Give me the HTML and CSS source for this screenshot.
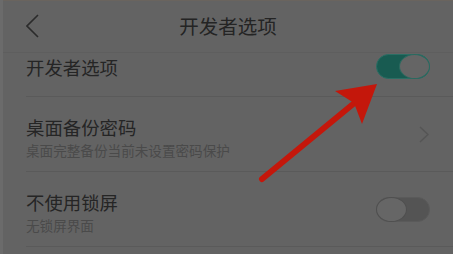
FILE: index.html
```html
<!DOCTYPE html>
<html lang="zh-CN">
<head>
  <meta charset="UTF-8" />
  <meta name="viewport" content="width=device-width, initial-scale=1" />
  <title>开发者选项</title>
  <link rel="stylesheet" href="styles.css">
</head>
<body>
  <div class="screen">
    <header class="topbar">
      <svg class="back" width="14" height="24" viewBox="0 0 14 24">
        <polyline points="12,1 1,12 12,23" fill="none" stroke="#2b2b2b" stroke-width="1.6" />
      </svg>
      <h1>开发者选项</h1>
    </header>

    <div class="row row-first">
      <div class="texts">
        <div class="title">开发者选项</div>
      </div>
      <span class="toggle on"><span class="knob"></span></span>
    </div>

    <div class="row row-tall">
      <div class="texts">
        <div class="title">桌面备份密码</div>
        <div class="sub">桌面完整备份当前未设置密码保护</div>
      </div>
      <svg class="chev" width="10" height="18" viewBox="0 0 10 18">
        <polyline points="1,1 9,8.5 1,16" fill="none" stroke="#555" stroke-width="1.5" />
      </svg>
    </div>

    <div class="row row-tall">
      <div class="texts">
        <div class="title">不使用锁屏</div>
        <div class="sub">无锁屏界面</div>
      </div>
      <span class="toggle off"><span class="knob"></span></span>
    </div>

    <!-- red arrow drawn over the screenshot -->
    <svg class="arrow" width="453" height="254" viewBox="0 0 453 254">
      <line x1="262" y1="179" x2="358" y2="100" stroke="#c4170b" stroke-width="6" stroke-linecap="round" />
      <polygon points="377,84 335,91 354,103 362,124" fill="#c4170b" />
    </svg>
  </div>
</body>
</html>
```

FILE: styles.css
```css
html, body {
  margin: 0;
  padding: 0;
}
body {
  background: #6b6b6b;
  font-family: "Noto Sans CJK SC", "Noto Sans", sans-serif;
  color: #262626;
  width: 453px;
  height: 254px;
  overflow: hidden;
}
.screen {
  position: relative;
  margin-left: 3px;
  height: 254px;
  background: #636363;
  border-top: 1px solid #6a645e;
  box-sizing: border-box;
}
.topbar {
  height: 51px;
  display: flex;
  align-items: center;
  justify-content: center;
  position: relative;
  border-bottom: 1px solid #5e5e5e;
}
.topbar h1 {
  margin: 0;
  font-size: 19.5px;
  font-weight: normal;
  line-height: 24px;
  color: #242424;
  margin-top: -2px;
}
.back {
  position: absolute;
  left: 23px;
  top: 13px;
}
.row {
  display: flex;
  justify-content: space-between;
  margin-left: 23px;
  padding-right: 23px;
  border-bottom: 1px solid #5a5a5a;
  box-sizing: border-box;
}
.row-first {
  height: 44px;
  align-items: flex-start;
  padding-top: 4px;
}
.row-first .toggle {
  margin-top: -3px;
}
.row-tall {
  height: 75px;
  align-items: center;
}
.row-tall .texts {
  align-self: flex-start;
  padding-top: 20px;
}
.title {
  font-size: 18.4px;
  line-height: 20px;
  color: #252525;
}
.sub {
  font-size: 13.6px;
  line-height: 16px;
  margin-top: 5px;
  color: #4a4a4a;
}
.chev {
  margin-right: 1px;
  margin-top: 2px;
}
.toggle {
  width: 54px;
  height: 25px;
  border-radius: 13px;
  box-sizing: border-box;
  position: relative;
  display: block;
}
.toggle .knob {
  position: absolute;
  top: 0;
  width: 31px;
  height: 25px;
  border-radius: 50%;
  box-sizing: border-box;
}
.toggle.on {
  background: #185b51;
  border: 1px solid #2a6e64;
}
.toggle.on .knob {
  right: -1px;
  top: -1px;
  background: #656565;
  border: 1.5px solid #2a6a60;
}
.toggle.off {
  background: #545454;
  border: 1px solid #5a5a5a;
}
.toggle.off .knob {
  left: -1px;
  top: -1px;
  background: #666;
  border: 1.5px solid #4f4f4f;
}
.arrow {
  position: absolute;
  left: -3px;
  top: -1px;
  pointer-events: none;
}
```
